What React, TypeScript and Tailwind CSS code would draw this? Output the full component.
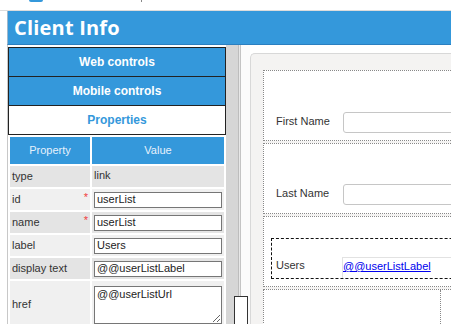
import React from "react";

type Prop = {
  name: string;
  value: string;
  required?: boolean;
  kind: "text" | "input" | "area";
};

const props: Prop[] = [
  { name: "type", value: "link", kind: "text" },
  { name: "id", value: "userList", required: true, kind: "input" },
  { name: "name", value: "userList", required: true, kind: "input" },
  { name: "label", value: "Users", kind: "input" },
  { name: "display text", value: "@@userListLabel", kind: "input" },
  { name: "href", value: "@@userListUrl", kind: "area" },
];

function NavButton({ label, active }: { label: string; active?: boolean }) {
  return (
    <div
      className={`h-[29px] flex items-center justify-center border-b border-[#222] text-[12px] font-bold ${
        active ? "bg-white text-[#3498db]" : "bg-[#3498db] text-white"
      }`}
    >
      {label}
    </div>
  );
}

function PropertyTable() {
  return (
    <table className="border-separate border-spacing-[2px] w-[218px] table-fixed text-[11px] text-[#333]">
      <colgroup>
        <col className="w-[80px]" />
        <col className="w-[132px]" />
      </colgroup>
      <thead>
        <tr className="h-[27px] bg-[#3498db] text-[#e6f1fb]">
          <th className="font-normal">Property</th>
          <th className="font-normal">Value</th>
        </tr>
      </thead>
      <tbody>
        {props.map((p, i) => (
          <tr
            key={p.name}
            className={`${i % 2 === 0 ? "bg-[#e4e4e4]" : "bg-[#f0f0f0]"} ${
              p.kind === "area" ? "h-[46px]" : "h-[21px]"
            }`}
          >
            <td className="p-0 pl-[2px]">
              <div className="flex items-center justify-between pr-[2px]">
                <span>{p.name}</span>
                {p.required && (
                  <span className="text-[#f03c3c] text-[11px] leading-none -mt-[4px]">*</span>
                )}
              </div>
            </td>
            <td className="p-0 pl-[2px]">
              {p.kind === "text" && <span className="-mt-[2px] block">{p.value}</span>}
              {p.kind === "input" && (
                <input
                  readOnly
                  value={p.value}
                  className="block w-[128px] h-[16px] border border-[#767676] bg-white px-[2px] text-[11px] text-[#222] outline-none"
                />
              )}
              {p.kind === "area" && (
                <textarea
                  readOnly
                  value={p.value}
                  className="block w-[128px] h-[38px] mt-[1px] border border-[#767676] bg-white px-[2px] py-0 text-[11px] leading-[14px] text-[#222] outline-none"
                />
              )}
            </td>
          </tr>
        ))}
      </tbody>
    </table>
  );
}

function FormRow({ children, tall }: { children?: React.ReactNode; tall?: boolean }) {
  return (
    <div
      className={`w-[260px] shrink-0 border border-dotted border-[#888] bg-white ${
        tall ? "h-[80px]" : "h-[71px]"
      }`}
    >
      {children}
    </div>
  );
}

export default function App() {
  return (
    <div className="w-[451px] h-[324px] overflow-hidden bg-white relative font-['Liberation_Sans',Arial,sans-serif]">
      {/* top strip */}
      <div className="h-[11px] border-b border-[#dcdcdc] relative">
        <div className="absolute left-[29px] top-0 w-[14px] h-[2px] bg-[#3498db] rounded-b" />
        <div className="absolute left-[141px] top-0 w-px h-[2px] bg-[#888]" />
      </div>

      {/* header */}
      <div className="ml-[7px] h-[34px] bg-[#3498db] border-b border-[#2a7fc0] border-l border-l-[#9fb8cc] flex items-center pl-[6px]">
        <span className="text-white text-[20px] font-bold font-['Open_Sans',sans-serif] tracking-[0.2px]">
          Client Info
        </span>
      </div>

      <div className="flex ml-[7px] h-[279px]">
        {/* left panel */}
        <div className="w-[219px] border-l border-[#c8c8c8] pt-[2px] flex flex-col">
          <div className="w-[218px] border-x border-t border-[#222]">
            <NavButton label="Web controls" />
            <NavButton label="Mobile controls" />
            <NavButton label="Properties" active />
          </div>
          <PropertyTable />
        </div>

        {/* splitter */}
        <div className="relative w-[24px] flex">
          <div className="w-[13px] bg-[#d6d6d6] border-r border-[#bdbdbd]" />
          <div className="w-px bg-[#e8e8e8]" />
          <div className="w-px bg-[#c4c4c4]" />
          <div className="flex-1 bg-[#fbfbfb]" />
          <div className="absolute left-[8px] top-[251px] w-[14px] h-[40px] bg-white border border-[#333]" />
        </div>

        {/* designer canvas */}
        <div className="flex-1 pt-[8px] overflow-hidden">
          <div className="h-[300px] w-[260px] bg-[#f4f3f2] border-t border-l border-[#d8d8d8] rounded-tl-[5px] pl-[12px] pt-[16px] flex flex-col gap-[2px] text-[11px] text-[#333]">
            <FormRow>
              <div className="flex items-center pl-[12px] pt-[41px]">
                <span className="w-[67px] -mt-[3px]">First Name</span>
                <div className="w-[160px] h-[21px] rounded-[3px] border border-[#c6c6c6] bg-white" />
              </div>
            </FormRow>
            <FormRow>
              <div className="flex items-center pl-[12px] pt-[40px]">
                <span className="w-[67px] -mt-[3px]">Last Name</span>
                <div className="w-[160px] h-[21px] rounded-[3px] border border-[#c6c6c6] bg-white" />
              </div>
            </FormRow>
            <FormRow>
              <div className="ml-[7px] mt-[21px] h-[41px] border border-dashed border-[#111] flex items-end">
                <span className="pl-[4px] pb-[5px] w-[70px]">Users</span>
                <div className="h-[21px] flex-1 border-t border-l border-[#e2e2e2]">
                  <a href="#" className="text-[#0000ee] underline">
                    @@userListLabel
                  </a>
                </div>
              </div>
            </FormRow>
            <FormRow tall>
              <div className="ml-[176px] h-full border-l border-dotted border-[#888]" />
            </FormRow>
          </div>
        </div>
      </div>
    </div>
  );
}
